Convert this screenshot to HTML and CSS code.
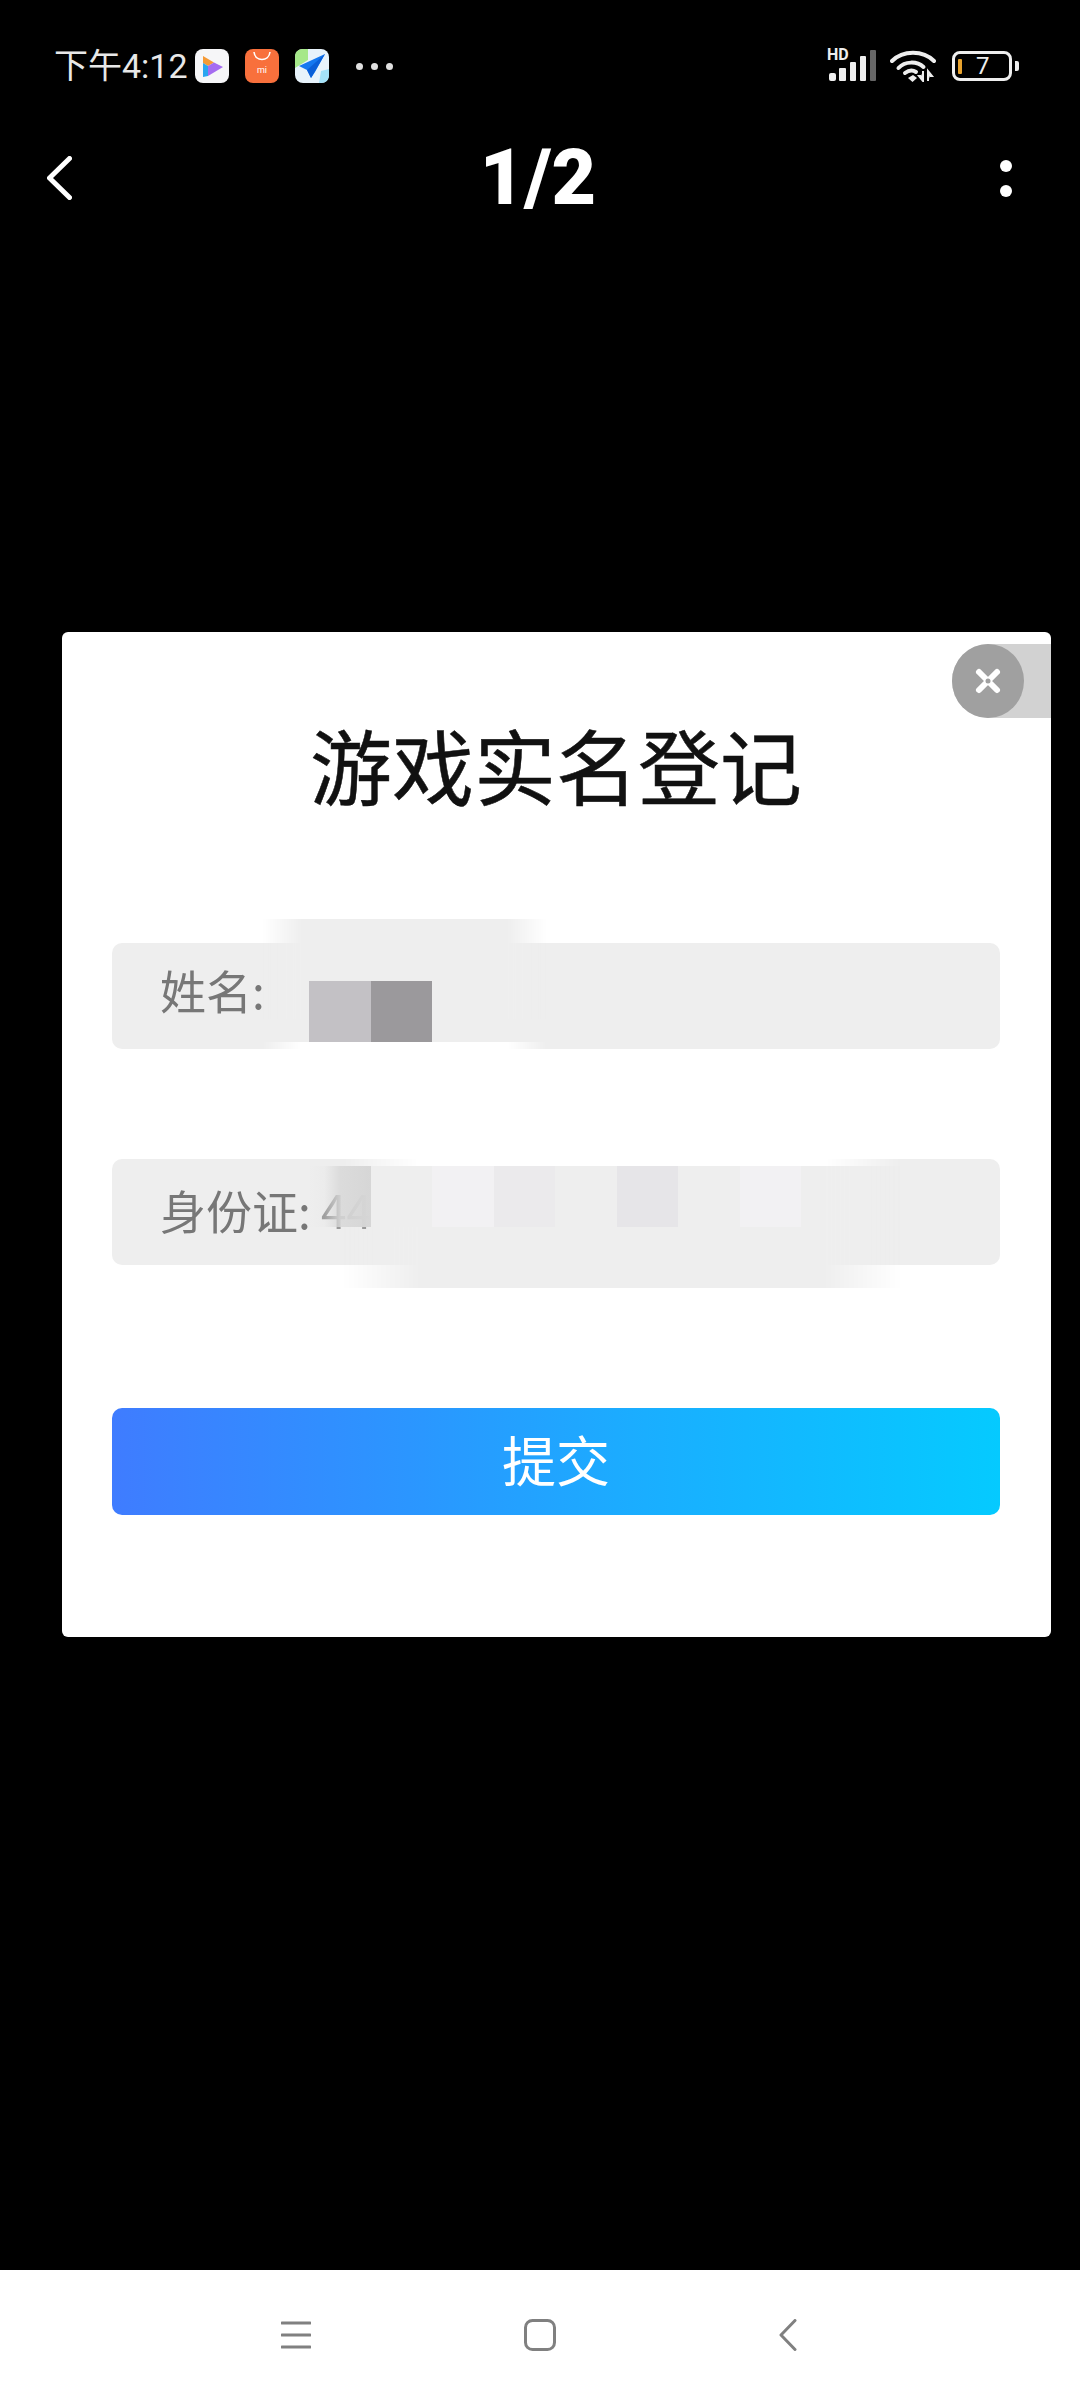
FILE: index.html
```html
<!DOCTYPE html>
<html lang="zh-CN">
<head>
    <meta charset="UTF-8">
    <meta name="viewport" content="width=device-width, initial-scale=1.0">
    <title>游戏实名登记</title>
    <link rel="stylesheet" href="styles.css">
</head>
<body>
    <div class="screen">
        <div class="statusbar">
            <div class="status-left">
                <span class="clock">下午4:12</span>
                <div class="app-icons">
                    <svg class="app-icon" viewBox="0 0 34 34">
                        <rect width="34" height="34" rx="8" fill="#f6f6f8"/>
                        <path d="M8 7 L19 13.5 L13 17 L8 14 Z" fill="#f59a36"/>
                        <path d="M8 14 L13 17 L13 27 L8 28 Z" fill="#2aa6f0"/>
                        <path d="M13 17 L19 13.5 L28 18 L13 27 Z" fill="#a56cf0"/>
                    </svg>
                    <svg class="app-icon" viewBox="0 0 34 34">
                        <rect width="34" height="34" rx="8" fill="#f8703c"/>
                        <path d="M9 3 C10 13 24 13 25 3" fill="none" stroke="#fff" stroke-width="1.6"/>
                        <text x="17" y="24" class="mi-text">mi</text>
                    </svg>
                    <svg class="app-icon" viewBox="0 0 34 34">
                        <rect width="34" height="34" rx="8" fill="#e8f3fb"/>
                        <path d="M0 8 C0 3 3 0 8 0 L13 0 L13 11 L0 19 Z" fill="#a6e88a"/>
                        <path d="M24 34 L26 22 L34 20 L34 26 C34 31 31 34 26 34 Z" fill="#a4e2f8"/>
                        <path d="M30 5 L4 17 L12 21 L16 29 L20 23 Z" fill="#1478f0"/>
                        <path d="M30 5 L12 21 L16 29 Z" fill="#0a5fd8"/>
                    </svg>
                </div>
                <div class="status-dots">
                    <span class="status-dot"></span>
                    <span class="status-dot"></span>
                    <span class="status-dot"></span>
                </div>
            </div>
            <div class="status-right">
                <div class="signal">
                    <span class="hd">HD</span>
                    <svg class="signal-bars" viewBox="0 0 48 31">
                        <rect x="0" y="23" width="7" height="8" rx="2" fill="#eee"/>
                        <rect x="10" y="18" width="7" height="13" rx="1" fill="#eee"/>
                        <rect x="21" y="12" width="6" height="19" rx="1" fill="#eee"/>
                        <rect x="31" y="6" width="6" height="25" rx="1" fill="#eee"/>
                        <rect x="41" y="0" width="6" height="31" rx="1" fill="#666"/>
                    </svg>
                </div>
                <svg class="wifi" viewBox="0 0 46 32">
                    <path d="M2 11 C13 0 33 0 44 11" fill="none" stroke="#eee" stroke-width="4" stroke-linecap="round"/>
                    <path d="M8.5 18 C15 11 27 11 33.5 17" fill="none" stroke="#eee" stroke-width="4" stroke-linecap="round"/>
                    <path d="M15 23 C19 20 23 20 26 22" fill="none" stroke="#eee" stroke-width="4" stroke-linecap="round"/>
                    <path d="M18 28 L23 25 L27 28 L22.500 32 Z" fill="#eee"/>
                    <path d="M33 21 V31 L29 26 H31 M38 31 V21 L42 26 H40" fill="#eee" stroke="#eee" stroke-width="2"/>
                </svg>
                <div class="battery">
                    <div class="battery-body">
                        <span class="battery-level"></span>
                        <span class="battery-num">7</span>
                    </div>
                    <span class="battery-nub"></span>
                </div>
            </div>
        </div>

        <div class="appbar">
            <svg class="back-icon" viewBox="0 0 25 44">
                <path d="M22.500 2.500 L2.500 22 L22.500 41.500" fill="none" stroke="#fff" stroke-width="5" stroke-linecap="round" stroke-linejoin="round"/>
            </svg>
            <div class="page-num">1/2</div>
            <div class="more">
                <span class="more-dot"></span>
                <span class="more-dot"></span>
            </div>
        </div>

        <div class="content">
            <div class="card">
                <div class="close-tab">
                    <div class="close-btn">
                        <svg class="close-icon" viewBox="0 0 28 28">
                            <path d="M5 5 L23 23 M23 5 L5 23" fill="none" stroke="#fff" stroke-width="6" stroke-linecap="round"/>
                            <circle cx="14" cy="14" r="2.500" fill="#a0a0a0"/>
                        </svg>
                    </div>
                </div>

                <div class="card-title">游戏实名登记</div>

                <div class="field field-name">
                    <span class="smudge smudge-name"></span>
                    <span class="smudge-cut smudge-cut-name"></span>
                    <span class="field-label">姓名:</span>
                    <div class="mosaic mosaic-name">
                        <span class="tile tile-light"></span>
                        <span class="tile tile-dark"></span>
                    </div>
                </div>

                <div class="field field-id">
                    <span class="smudge-cut smudge-cut-id"></span>
                    <span class="smudge smudge-id"></span>
                    <span class="field-label">身份证: <span class="field-value">44</span></span>
                    <div class="mosaic mosaic-id">
                        <span class="tile tile-fade"></span>
                        <span class="tile tile-base"></span>
                        <span class="tile tile-pale"></span>
                        <span class="tile tile-soft"></span>
                        <span class="tile tile-base"></span>
                        <span class="tile tile-mid"></span>
                        <span class="tile tile-base"></span>
                        <span class="tile tile-pale"></span>
                    </div>
                </div>

                <div class="submit">提交</div>
            </div>
        </div>

        <div class="navbar">
            <svg class="nav-icon nav-menu" viewBox="0 0 30 28">
                <path d="M1 2 H29 M1 14 H29 M1 26 H29" fill="none" stroke="#808080" stroke-width="3" stroke-linecap="round"/>
            </svg>
            <svg class="nav-icon nav-home" viewBox="0 0 32 32">
                <rect x="1.500" y="1.500" width="29" height="29" rx="7" fill="none" stroke="#808080" stroke-width="3"/>
            </svg>
            <svg class="nav-icon nav-back" viewBox="0 0 18 32">
                <path d="M16 1.500 L2 16 L16 30.500" fill="none" stroke="#808080" stroke-width="3" stroke-linecap="round" stroke-linejoin="round"/>
            </svg>
        </div>
    </div>
</body>
</html>
```

FILE: styles.css
```css
body {
    margin: 0;
    background-color: #000;
    font-family: "Noto Sans CJK SC", "Noto Sans", sans-serif;
}

.screen {
    width: 1080px;
    height: 2400px;
    display: flex;
    flex-direction: column;
    overflow: hidden;
}

/* status bar */
.statusbar {
    height: 36px;
    margin-top: 48px;
    padding: 0 61px 0 54px;
    display: flex;
    justify-content: space-between;
    align-items: center;
}

.status-left {
    display: flex;
    align-items: center;
}

.clock {
    width: 141px;
    font-family: Roboto, "Noto Sans CJK SC", sans-serif;
    font-size: 34px;
    line-height: 36px;
    color: #e8e8e8;
    white-space: nowrap;
}

.app-icons {
    display: flex;
    gap: 16px;
}

.app-icon {
    width: 34px;
    height: 34px;
    display: block;
}

.mi-text {
    font-family: Roboto, sans-serif;
    font-size: 9px;
    font-weight: 400;
    fill: #fff;
    text-anchor: middle;
}

.status-dots {
    display: flex;
    gap: 8px;
    margin-left: 27px;
}

.status-dot {
    width: 7px;
    height: 7px;
    border-radius: 50%;
    background-color: #e0e0e0;
}

.status-right {
    display: flex;
    align-items: center;
}

.signal {
    width: 50px;
    height: 32px;
    position: relative;
}

.hd {
    position: absolute;
    top: -3px;
    left: -2px;
    font-family: Roboto, sans-serif;
    font-size: 16px;
    font-weight: 700;
    line-height: 16px;
    color: #eee;
}

.signal-bars {
    width: 48px;
    height: 31px;
    display: block;
}

.wifi {
    width: 46px;
    height: 32px;
    margin-left: 11px;
    display: block;
}

.battery {
    display: flex;
    align-items: center;
    margin-left: 16px;
}

.battery-body {
    width: 60px;
    height: 30px;
    box-sizing: border-box;
    border: 3px solid #eee;
    border-radius: 8px;
    display: flex;
    align-items: center;
    padding-left: 3px;
}

.battery-level {
    width: 4px;
    height: 15px;
    border-radius: 1px;
    background-color: #e8a32e;
}

.battery-num {
    margin-left: 14px;
    font-family: Roboto, sans-serif;
    font-size: 24px;
    line-height: 24px;
    color: #eee;
}

.battery-nub {
    width: 4px;
    height: 10px;
    margin-left: 3px;
    border-radius: 0 2px 2px 0;
    background-color: #eee;
}

/* title row */
.appbar {
    height: 80px;
    margin-top: 54px;
    padding: 0 68px 0 47px;
    display: flex;
    justify-content: space-between;
    align-items: center;
}

.back-icon {
    width: 25px;
    height: 44px;
    display: block;
}

.page-num {
    margin-left: 4px;
    font-family: Roboto, sans-serif;
    font-size: 77px;
    font-weight: 900;
    line-height: 80px;
    color: #fff;
}

.more {
    display: flex;
    flex-direction: column;
    gap: 13px;
}

.more-dot {
    width: 12px;
    height: 12px;
    border-radius: 50%;
    background-color: #fff;
}

/* dialog */
.content {
    flex: 1;
    padding: 414px 0 0 62px;
}

.card {
    width: 989px;
    height: 1005px;
    box-sizing: border-box;
    padding: 91px 51px 0 50px;
    background-color: #fff;
    border-radius: 6px;
    position: relative;
}

.close-tab {
    position: absolute;
    top: 12px;
    right: 0;
    width: 99px;
    height: 74px;
    background-color: #d2d2d2;
    border-radius: 37px 0 0 37px;
}

.close-btn {
    width: 72px;
    height: 74px;
    border-radius: 50%;
    background-color: #a0a0a0;
    display: flex;
    align-items: center;
    justify-content: center;
}

.close-icon {
    width: 28px;
    height: 28px;
    display: block;
}

.card-title {
    font-size: 82px;
    line-height: 81px;
    color: #111;
    text-align: center;
    white-space: nowrap;
    -webkit-text-stroke: 0.5px #111;
    filter: blur(0.5px);
}

.field {
    height: 106px;
    box-sizing: border-box;
    padding-left: 48px;
    background-color: #eee;
    border-radius: 10px;
    display: flex;
    align-items: center;
    position: relative;
}

.field-name {
    margin-top: 139px;
    padding-bottom: 14px;
}

.field-id {
    margin-top: 110px;
    padding-bottom: 6px;
}

.field-label {
    font-size: 46px;
    line-height: 56px;
    color: #777;
    white-space: nowrap;
    position: relative;
    filter: blur(0.5px);
}

.field-value {
    color: #999;
}

/* retouched patches over the fields */
.smudge,
.smudge-cut {
    position: absolute;
    -webkit-mask-image: linear-gradient(to right, transparent, #000 14%, #000 86%, transparent);
    mask-image: linear-gradient(to right, transparent, #000 14%, #000 86%, transparent);
}

.smudge {
    background-color: #eee;
}

.smudge-cut {
    background-color: #fff;
}

.smudge-name {
    top: -24px;
    left: 150px;
    width: 285px;
    height: 100px;
}

.smudge-cut-name {
    top: 99px;
    left: 150px;
    width: 285px;
    height: 7px;
}

.smudge-id {
    top: 7px;
    left: 230px;
    width: 560px;
    height: 122px;
}

.smudge-cut-id {
    top: 0;
    left: 230px;
    width: 560px;
    height: 7px;
}

.mosaic {
    position: absolute;
    left: 197px;
    display: flex;
}

.mosaic-name {
    top: 38px;
}

.mosaic-id {
    top: 7px;
}

.tile {
    width: 61.500px;
    height: 61px;
}

.tile-light {
    background-color: #c3c1c5;
}

.tile-dark {
    background-color: #9b999c;
}

.tile-fade {
    background: linear-gradient(to right, rgba(214, 214, 214, 0), rgba(214, 214, 214, 0.1) 25%, rgba(216, 216, 216, 0.85) 50%, #d6d6d6);
}

.tile-base {
    background-color: #eee;
}

.tile-pale {
    background-color: #f2f1f3;
}

.tile-soft {
    background-color: #ebeaec;
}

.tile-mid {
    background-color: #e6e5e8;
}

.submit {
    height: 107px;
    margin-top: 143px;
    border-radius: 10px;
    background: linear-gradient(to right, #3f7cff, #2a97ff 35%, #1aaeff 60%, #05caff);
    color: #fff;
    font-size: 54px;
    line-height: 102px;
    text-align: center;
}

/* system navigation */
.navbar {
    height: 130px;
    background-color: #fff;
    display: flex;
    align-items: center;
    justify-content: space-between;
    padding: 0 283px 0 281px;
    box-sizing: border-box;
}

.nav-icon {
    display: block;
}

.nav-menu {
    width: 30px;
    height: 28px;
}

.nav-home {
    width: 32px;
    height: 32px;
    margin-right: 10px;
}

.nav-back {
    width: 18px;
    height: 32px;
}
```
